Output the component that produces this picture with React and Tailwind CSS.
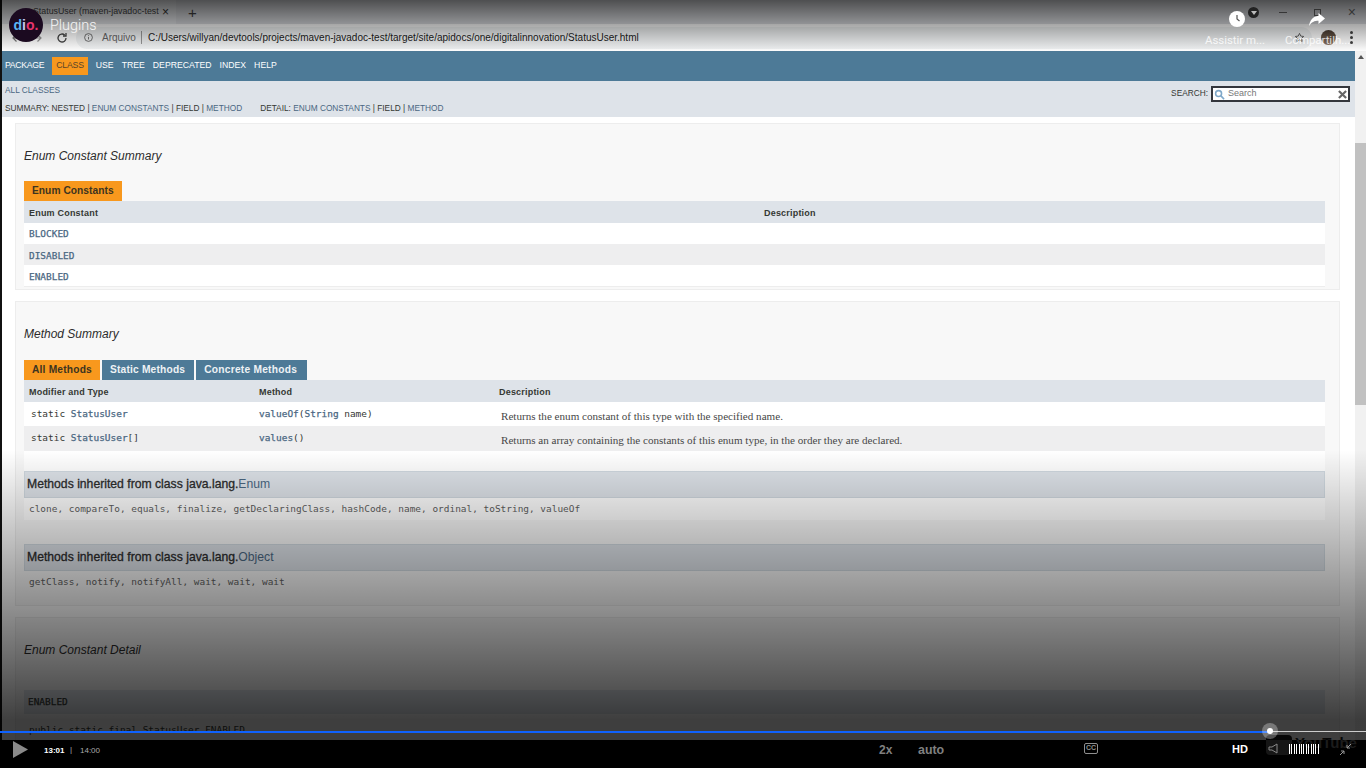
const sans = "font-['Liberation_Sans',Arial,sans-serif]";
const mono = "font-['DejaVu_Sans_Mono',monospace]";
const serif = "font-['Liberation_Serif',serif]";
const roboto = "font-['Roboto',sans-serif]";

const Sep = () => <span className="text-[#353833]"> | </span>;
const A = ({ children }) => <span className="text-[#4a6782]">{children}</span>;

const Tab = ({ active, children, className = "" }) => (
    <div className={`h-5 flex items-center pl-2 pr-2 ${sans} text-[10.2px] font-bold ${active ? "bg-[#f8981d] text-[#3d3420]" : "bg-[#4d7a97] text-[#eef2f5]"} ${className}`}>
        {children}
    </div>
);

const Inherited = ({ name, items, className }) => (
    <div className={className}>
        <div className={`h-[27px] flex items-center px-[2px] bg-[#dee3e9] border border-[#d0d9e0] ${sans} text-[12.2px] text-[#2c2c2c]`}>
            <span className="[-webkit-text-stroke:0.3px]">Methods inherited from class java.lang.</span>
            <span className="text-[#4a6782]">{name}</span>
        </div>
        <div className={`h-[21px] mt-[1px] flex items-center px-[5px] ${mono} text-[9.45px] text-[#5f5f5f]`}>{items}</div>
    </div>
);

const Browser = () => (
    <div className="h-[51px] bg-[#dfe1e5] flex flex-col shrink-0">
        <div className={`h-6 flex items-center ${sans} text-[8.8px] text-[#444]`}>
            <div className="w-[174px] h-6 pl-[31px] flex items-center justify-between pr-[7px] bg-[#e8eaed]">
                <span>StatusUser (maven-javadoc-test</span>
                <span className="text-[12px] text-[#333]">×</span>
            </div>
            <span className="ml-[12px] text-[15px] text-[#444] leading-none">+</span>
            <div className="ml-auto flex items-center gap-[27px] pr-[10px]">
                <span className="w-[8px] h-px bg-[#6a6a6a]" />
                <span className="w-[7px] h-[7px] border border-[#6a6a6a]" />
                <span className="text-[14px] text-[#6a6a6a] leading-none">×</span>
            </div>
        </div>
        <div className="h-[27px] flex items-center bg-white pl-[9px]">
            <svg width="12" height="12" viewBox="0 0 24 24" fill="none" stroke="#777" strokeWidth="2.4">
                <path d="M21 12H4M11 5l-7 7 7 7" />
            </svg>
            <svg className="ml-2" width="12" height="12" viewBox="0 0 24 24" fill="none" stroke="#999" strokeWidth="2.4">
                <path d="M3 12h17M13 5l7 7-7 7" />
            </svg>
            <svg className="ml-[13px]" width="12" height="12" viewBox="0 0 24 24" fill="none" stroke="#444" strokeWidth="2.6">
                <path d="M20 12a8 8 0 1 1-2.5-5.8" />
                <path d="M20 2v6h-6" />
            </svg>
            <div className="ml-2 flex-1 h-[22px] rounded-full bg-[#f1f3f4] flex items-center pl-2 pr-[7px]">
                <svg width="9" height="9" viewBox="0 0 18 18" fill="none" stroke="#555" strokeWidth="1.6">
                    <circle cx="9" cy="9" r="7.8" />
                    <path d="M9 8v5M9 4.6v1.6" />
                </svg>
                <span className={`ml-[9px] ${sans} text-[10px] text-[#666]`}>Arquivo</span>
                <span className="ml-[5px] w-px h-[13px] bg-[#999]" />
                <span className={`ml-[6px] ${sans} text-[10px] text-[#222]`}>C:/Users/willyan/devtools/projects/maven-javadoc-test/target/site/apidocs/one/digitalinnovation/StatusUser.html</span>
                <svg className="ml-auto" width="11" height="11" viewBox="0 0 24 24" fill="none" stroke="#555" strokeWidth="2">
                    <path d="m12 3 2.8 5.9 6.4.8-4.7 4.4 1.2 6.4-5.7-3.1-5.7 3.1 1.2-6.4L2.8 9.7l6.4-.8z" />
                </svg>
            </div>
            <div className="ml-[9px] w-[15px] h-[15px] rounded-full bg-gradient-to-b from-[#4a3d33] to-[#8c7461]" />
            <div className="ml-[14px] mr-[13px] flex flex-col gap-[2px]">
                <span className="w-[3px] h-[3px] rounded-full bg-[#444]" />
                <span className="w-[3px] h-[3px] rounded-full bg-[#444]" />
                <span className="w-[3px] h-[3px] rounded-full bg-[#444]" />
            </div>
        </div>
    </div>
);

const NavBar = () => (
    <div className={`h-[30px] shrink-0 bg-[#4d7a97] flex items-center pl-[3px] gap-2 ${sans} text-[8.7px] text-white`}>
        <span className="tracking-[-0.3px]">PACKAGE</span>
        <span className="h-[18px] flex items-center px-1 tracking-[-0.2px] bg-[#f8981d] text-[#59452a]">CLASS</span>
        <span>USE</span>
        <span>TREE</span>
        <span>DEPRECATED</span>
        <span>INDEX</span>
        <span>HELP</span>
    </div>
);

const SubNav = () => (
    <div className={`h-9 shrink-0 bg-[#dee3e9] flex justify-between pl-[3px] pr-[5px] ${sans} text-[8.3px] text-[#353833]`}>
        <div className="flex flex-col pt-[5px] gap-[9px] leading-[9px]">
            <A>ALL CLASSES</A>
            <div className="whitespace-pre">
                SUMMARY: NESTED<Sep /><A>ENUM CONSTANTS</A><Sep />FIELD<Sep /><A>METHOD</A>
                <span className="ml-[18px]">DETAIL: </span><A>ENUM CONSTANTS</A><Sep />FIELD<Sep /><A>METHOD</A>
            </div>
        </div>
        <div className="flex items-start pt-[5px] gap-[3px]">
            <span className="mt-[3px] leading-[9px]">SEARCH:</span>
            <div className="w-[139px] h-[16px] bg-white border-2 border-[#33363c] flex items-center pl-[1px] pr-[1px]">
                <svg width="11" height="11" viewBox="0 0 24 24" fill="none" stroke="#7fa8c9" strokeWidth="3.4">
                    <circle cx="10" cy="10" r="6.5" />
                    <path d="m15 15 7 7" />
                </svg>
                <span className="ml-[3px] text-[#777] text-[9px]">Search</span>
                <svg className="ml-auto" width="9" height="9" viewBox="0 0 10 10" stroke="#666" strokeWidth="2.4">
                    <path d="M1 1l8 8M9 1l-8 8" />
                </svg>
            </div>
        </div>
    </div>
);

const Heading = ({ children }) => (
    <h3 className={`${sans} italic text-[12px] leading-[18px] text-[#2c2c2c]`}>{children}</h3>
);

const EnumSummary = () => (
    <section className="h-[167px] shrink-0 bg-[#f8f8f8] border border-[#ededed] pl-2 pr-[14px] pt-[23px]">
        <Heading>Enum Constant Summary</Heading>
        <div className="flex mt-4"><Tab active className="tracking-[0.05px]">Enum Constants</Tab></div>
        <div className={`h-[22px] pt-[3px] bg-[#dee3e9] grid grid-cols-[735px_1fr] items-center pl-[5px] ${sans} font-bold tracking-[0.2px] text-[9px] text-[#353833]`}>
            <span>Enum Constant</span>
            <span>Description</span>
        </div>
        <div className={`${mono} text-[9.45px] text-[#4a6782] [-webkit-text-stroke:0.25px]`}>
            <div className="h-[21px] pt-[2px] bg-white flex items-center pl-[5px]">BLOCKED</div>
            <div className="h-[21px] pt-[3px] bg-[#eeeeef] flex items-center pl-[5px]">DISABLED</div>
            <div className="h-[22px] pt-[3px] bg-white flex items-center pl-[5px] border-b border-[#ededed]">ENABLED</div>
        </div>
    </section>
);

const Link = ({ children }) => (
    <span className="text-[#4a6782] [-webkit-text-stroke:0.25px]">{children}</span>
);

const MethodRow = ({ suffix, method, rest, desc, className }) => (
    <div className={`grid grid-cols-[228px_242px_1fr] items-center pl-[7px] ${className}`}>
        <span className={`${mono} text-[9.45px] text-[#353833]`}>static <Link>StatusUser</Link>{suffix}</span>
        <span className={`${mono} text-[9.45px] text-[#353833]`}><Link>{method}</Link>{rest}</span>
        <span className={`${serif} text-[11.1px] text-[#474747] pt-1`}>{desc}</span>
    </div>
);

const MethodSummary = () => (
    <section className="h-[305px] shrink-0 bg-[#f8f8f8] border border-[#ededed] pl-2 pr-[14px] pt-[23px]">
        <Heading>Method Summary</Heading>
        <div className="flex gap-[2px] mt-[17px]">
            <Tab active className="tracking-[0.2px]">All Methods</Tab>
            <Tab className="tracking-[0.2px] !pr-[9px]">Static Methods</Tab>
            <Tab className="tracking-[0.25px] !pr-[10px]">Concrete Methods</Tab>
        </div>
        <div className={`h-[22px] pt-[3px] bg-[#dee3e9] grid grid-cols-[230px_240px_1fr] items-center pl-[5px] ${sans} font-bold tracking-[0.2px] text-[9px] text-[#353833]`}>
            <span>Modifier and Type</span>
            <span>Method</span>
            <span>Description</span>
        </div>
        <MethodRow className="h-6 bg-white" method="valueOf" rest={<>(<Link>String</Link> name)</>} desc="Returns the enum constant of this type with the specified name." />
        <MethodRow className="h-[25px] bg-[#eeeeef]" suffix="[]" method="values" rest="()" desc="Returns an array containing the constants of this enum type, in the order they are declared." />
        <Inherited className="pt-5 bg-white" name="Enum" items="clone, compareTo, equals, finalize, getDeclaringClass, hashCode, name, ordinal, toString, valueOf" />
        <Inherited className="mt-6" name="Object" items="getClass, notify, notifyAll, wait, wait, wait" />
    </section>
);

const EnumDetail = () => (
    <section className="h-[160px] shrink-0 bg-[#f8f8f8] border border-[#ededed] pl-2 pr-[14px] pt-[23px]">
        <Heading>Enum Constant Detail</Heading>
        <div className={`mt-[31px] h-[24px] bg-[#dee3e9] flex items-center pl-[4px] ${mono} text-[9.45px] text-[#353833] [-webkit-text-stroke:0.25px]`}>ENABLED</div>
        <div className={`mt-[9px] pl-[5px] ${mono} text-[9.45px] text-[#353833]`}>public static final StatusUser ENABLED</div>
    </section>
);

const Scrollbar = () => (
    <div className="w-[11px] h-full shrink-0 bg-[#f1f1f1] flex flex-col items-center">
        <span className="mt-[4px] w-0 h-0 border-x-[3px] border-x-transparent border-b-[4px] border-b-[#555]" />
        <span className="mt-[84px] w-full h-[262px] shrink-0 bg-[#c1c1c1]" />
    </div>
);

const PlayerTop = () => (
    <>
        <div className="absolute inset-x-0 top-0 h-[52px] bg-gradient-to-b from-black/65 to-black/0" />
        <div className="absolute left-[9px] top-[8px] w-[34px] h-[34px] rounded-full bg-[#1b0a20] flex items-center justify-center">
            <span className={`${sans} font-bold text-[14px] leading-none`}>
                <span className="text-[#5bb5f5]">d</span><span className="text-[#c9c6f0]">i</span><span className="text-[#e8356d]">o.</span>
            </span>
        </div>
        <span className={`absolute left-[50px] top-[17px] ${roboto} font-light text-[14.4px] text-white/90 leading-[18px]`}>Plugins</span>
        <div className="absolute left-[1229px] top-[11px] w-4 h-4 rounded-full bg-white">
            <svg width="16" height="16" viewBox="0 0 16 16" fill="none" stroke="#555" strokeWidth="1.2"><path d="M8 4v4l2.5 2" /></svg>
        </div>
        <span className="absolute left-[1248px] top-[7px] w-[11px] h-[11px] rounded-full bg-[#222] flex items-center justify-center">
            <span className="w-0 h-0 border-x-[3px] border-x-transparent border-t-[4px] border-t-[#bbb]" />
        </span>
        <span className={`absolute left-[1205px] top-[34px] ${roboto} text-[11.4px] text-white/80 leading-[13px]`}>Assistir m...</span>
        <svg className="absolute left-[1309px] top-[13px]" width="16" height="13" viewBox="0 0 16 13" fill="white">
            <path d="M9.5 0 16 5.5 9.5 11V7.7C5.5 7.7 2.5 9 0 13c.7-5.5 4-9.5 9.5-10.2z" />
        </svg>
        <span className={`absolute left-[1285px] top-[34px] ${roboto} text-[11.4px] text-white/80 leading-[13px]`}>Compartilh...</span>
    </>
);

const PlayerBottom = () => (
    <div className="h-7 bg-black relative shrink-0">
        {/* faint youtube watermark behind the controls */}
        <div className="absolute left-[1266px] top-[-5px] w-[26px] h-[20px] rounded-[4px] bg-[#161616]" />
        <span className={`absolute left-[1295px] top-[-9px] ${sans} font-bold text-[15px] leading-[24px] text-[#1c1c1c]`}>YouTube</span>
        <svg className="absolute left-[13px] top-[1px]" width="15" height="17" viewBox="0 0 15 17" fill="#8a8a8a"><path d="M0 0l15 8.5L0 17z" /></svg>
        <span className={`absolute left-[44px] top-[5px] ${sans} font-bold text-[8px] text-white`}>13:01</span>
        <span className={`absolute left-[70px] top-[4px] ${sans} text-[8px] text-[#aaa]`}>|</span>
        <span className={`absolute left-[80px] top-[5px] ${sans} text-[8px] text-[#aaa]`}>14:00</span>
        <span className={`absolute left-[879px] top-[1px] ${sans} font-bold text-[12px] text-[#808080]`}>2x</span>
        <span className={`absolute left-[918px] top-[1px] ${sans} font-bold text-[12.4px] text-[#808080]`}>auto</span>
        <span className={`absolute left-[1084px] top-[3px] w-[14px] h-[11px] border border-[#8f8f8f] rounded-[2px] ${sans} font-bold text-[7px] text-[#8f8f8f] flex items-center justify-center`}>CC</span>
        <span className={`absolute left-[1232px] top-[1px] ${sans} font-bold text-[11px] text-white`}>HD</span>
        <svg className="absolute left-[1268px] top-[3px]" width="11" height="11" viewBox="0 0 11 11" fill="none" stroke="#888"><path d="M1 4h3l5-3v9L4 7H1z" /></svg>
        <div className="absolute left-[1289px] top-[4px] w-8 h-[10px] flex gap-[1.4px]">
            {Array.from({ length: 13 }).map((_, i) => <span key={i} className="w-px h-full bg-white" />)}
        </div>
        <svg className="absolute left-[1339px] top-[3px]" width="13" height="13" viewBox="0 0 13 13" fill="none" stroke="#999" strokeWidth="1"><path d="M12 1 8 5M8 2v3h3M1 12l4-4M2 8h3v3" /></svg>
    </div>
);

export default function App() {
    return (
        <div className="w-[1366px] h-[768px] overflow-hidden flex flex-col bg-black relative">
            <div className="h-[740px] shrink-0 flex flex-col border-l-2 border-[#111] overflow-hidden bg-white">
                <Browser />
                <div className="flex flex-1 min-h-0">
                    <div className="flex-1 min-w-0 flex flex-col">
                        <NavBar />
                        <SubNav />
                        <main className="pl-[13px] pr-[15px] pt-[6px] flex flex-col gap-[11px]">
                            <EnumSummary />
                            <MethodSummary />
                            <EnumDetail />
                        </main>
                    </div>
                    <Scrollbar />
                </div>
            </div>
            <PlayerBottom />

            {/* video player layers that sit over the page */}
            <PlayerTop />
            <div className="absolute inset-x-0 top-[450px] h-[290px] bg-gradient-to-b from-black/0 to-black/75 to-[93%]" />
            <div className="absolute left-0 top-[731px] w-[1270px] h-[2px] bg-[#0f62fe]" />
            <div className="absolute left-[1270px] right-0 top-[731px] h-px bg-[#ccc]" />
            <div className="absolute left-[1262px] top-[723px] w-4 h-4 rounded-full bg-white/30 flex items-center justify-center">
                <span className="w-[6px] h-[6px] rounded-full bg-white" />
            </div>
        </div>
    );
}
